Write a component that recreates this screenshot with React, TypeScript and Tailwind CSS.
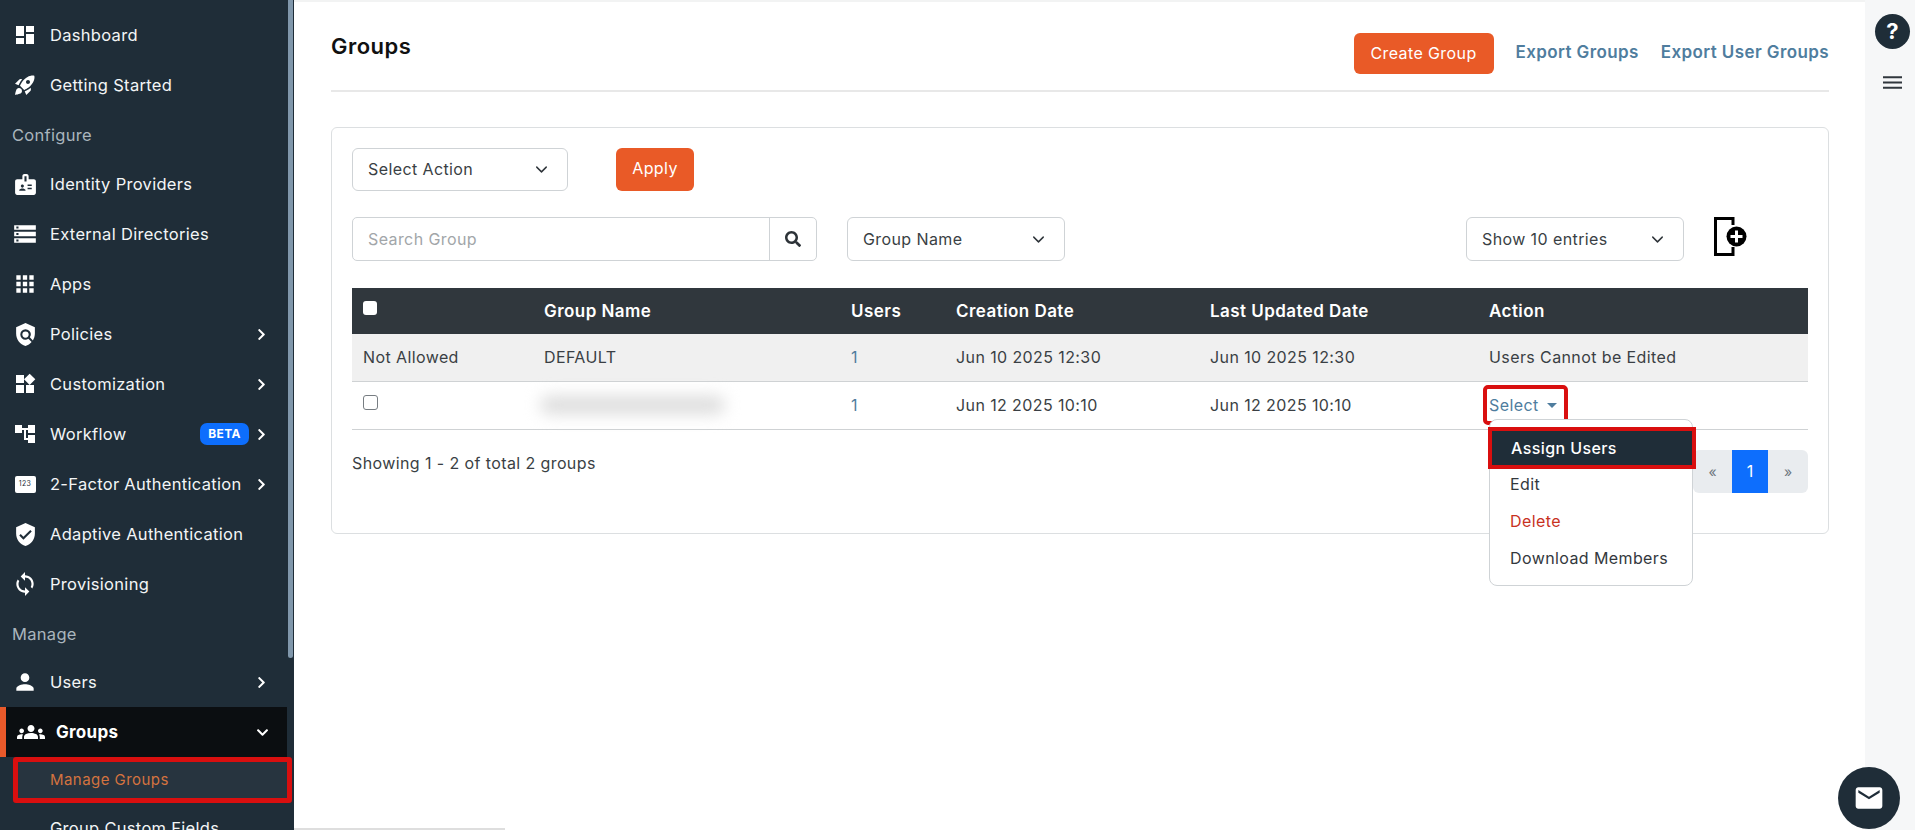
import { ReactElement } from "react";
import { ChevronDown } from "lucide-react";
import { FaChevronDown, FaChevronRight, FaSearch } from "react-icons/fa";
import {
  MdAccountTree,
  MdApps,
  MdBadge,
  MdDashboard,
  MdGroups,
  MdMail,
  MdPerson,
  MdPolicy,
  MdRocketLaunch,
  MdStorage,
  MdSync,
  MdVerifiedUser,
  MdWidgets,
} from "react-icons/md";

type NavProps = {
  icon: ReactElement;
  label: string;
  arrow?: boolean;
  beta?: boolean;
};

const NavRow = ({ icon, label, arrow, beta }: NavProps) => {
  return (
    <div className="flex items-center h-[50px] text-[#f3f5f6] text-[16.5px] tracking-[0.3px]">
      <div className="w-[50px] flex justify-center text-white">{icon}</div>
      <span className="whitespace-nowrap pt-[1px]">{label}</span>
      {beta && (
        <span className="ml-auto w-[49px] h-[22px] rounded-[7px] bg-[#0d6efd] text-white text-[12px] font-bold flex items-center justify-center">
          BETA
        </span>
      )}
      {arrow && (
        <span className={beta ? "ml-[6px] mr-[19px]" : "ml-auto mr-[19px]"}>
          <FaChevronRight size={13} className="text-white" />
        </span>
      )}
    </div>
  );
};

const NavLabel = ({ text, h }: { text: string; h: string }) => (
  <div className={`flex items-center pl-[12px] pt-[2px] text-[16.5px] tracking-[0.3px] text-[#aab5bd] ${h}`}>{text}</div>
);

const Sidebar = () => {
  return (
    <aside className="relative w-[294px] h-[830px] shrink-0 overflow-hidden bg-[#1f2d38] pt-[10px]">
      <div className="w-[287px]">
        <NavRow icon={<MdDashboard size={24} />} label="Dashboard" />
        <NavRow icon={<MdRocketLaunch size={24} />} label="Getting Started" />
        <NavLabel text="Configure" h="h-[49px]" />
        <NavRow icon={<MdBadge size={25} />} label="Identity Providers" />
        <NavRow icon={<MdStorage size={26} />} label="External Directories" />
        <NavRow icon={<MdApps size={26} />} label="Apps" />
        <NavRow icon={<MdPolicy size={25} />} label="Policies" arrow />
        <NavRow icon={<MdWidgets size={24} />} label="Customization" arrow />
        <NavRow icon={<MdAccountTree size={24} />} label="Workflow" beta arrow />
        <NavRow
          icon={
            <span className="w-[21px] h-[17px] rounded-[2px] bg-white text-[#1f2d38] text-[7px] flex items-center justify-center">
              123
            </span>
          }
          label="2-Factor Authentication"
          arrow
        />
        <NavRow icon={<MdVerifiedUser size={25} />} label="Adaptive Authentication" />
        <NavRow icon={<MdSync size={26} />} label="Provisioning" />
        <NavLabel text="Manage" h="h-[48px]" />
        <NavRow icon={<MdPerson size={26} />} label="Users" arrow />
        <div className="flex items-center h-[50px] bg-[#0b0e11] border-l-[6px] border-[#e9592a] text-white text-[17px] tracking-[0.3px] font-bold">
          <div className="w-[50px] flex justify-center">
            <MdGroups size={28} />
          </div>
          <span className="pt-[1px]">Groups</span>
          <FaChevronDown size={13} className="ml-auto mr-[18px]" />
        </div>
      </div>
      <div className="ml-[13px] w-[279px] h-[46px] border-[5px] border-[#d90f0f] rounded-[3px] bg-[#27343f] flex items-center pl-[32px] text-[15px] tracking-[0.45px] text-[#d4733f]">
        Manage Groups
      </div>
      <div className="h-[50px] flex items-center pl-[50px] text-[16.5px] tracking-[0.3px] text-[#f3f5f6]">
        Group Custom Fields
      </div>
      <div className="absolute left-[288px] top-0 w-[5px] h-[658px] rounded-b-[3px] bg-[#8097ab]" />
    </aside>
  );
};

const SelectBox = ({ label, className, textClass }: { label: string; className: string; textClass?: string }) => (
  <div
    className={`flex items-center justify-between border border-[#cfd3d6] rounded-[6px] pl-[15px] pr-[16px] text-[16px] tracking-[0.4px] text-[#3a3f44] ${className}`}
  >
    <span className={textClass}>{label}</span>
    <ChevronDown size={19} strokeWidth={1.8} className="text-[#2d3338]" />
  </div>
);

const cell = "px-[11px] text-left align-middle";
const headCell = "px-[11px] pt-[2px] text-left align-middle font-semibold text-[17px] tracking-[0.45px]";

const Dropdown = () => (
  <div className="absolute top-[37px] left-[11px] z-10 w-[204px] h-[167px] rounded-[8px] border border-[#cfd3d6] bg-white pt-[7px] text-[16px] text-[#33383d]">
    <div className="-ml-[2px] w-[208px] h-[42px] border-[4px] border-[#d90f0f] bg-[#1f2d38] text-white font-medium flex items-center pl-[19px]">
      Assign Users
    </div>
    <div className="-mt-[3px] h-[37px] flex items-center pl-[20px]">Edit</div>
    <div className="h-[37px] flex items-center pl-[20px] text-[#c8321f]">Delete</div>
    <div className="h-[36px] flex items-center pl-[20px]">Download Members</div>
  </div>
);

const GroupsTable = () => (
  <table className="w-full table-fixed border-collapse text-[16px] tracking-[0.4px] text-[#3a3f44]">
    <colgroup>
      <col className="w-[181px]" />
      <col className="w-[307px]" />
      <col className="w-[105px]" />
      <col className="w-[254px]" />
      <col className="w-[279px]" />
      <col />
    </colgroup>
    <thead>
      <tr className="h-[46px] bg-[#30373d] text-white">
        <th className={cell}>
          <span className="block w-[14px] h-[14px] rounded-[3px] bg-white -mt-[7px]" />
        </th>
        <th className={headCell}>Group Name</th>
        <th className={headCell}>Users</th>
        <th className={headCell}>Creation Date</th>
        <th className={headCell}>Last Updated Date</th>
        <th className={headCell}>Action</th>
      </tr>
    </thead>
    <tbody>
      <tr className="h-[47px] bg-[#f0f0f0] border-b border-[#cfd2d4]">
        <td className={cell}>Not Allowed</td>
        <td className={cell}>DEFAULT</td>
        <td className={`${cell} text-[#4f7d9e]`}>1</td>
        <td className={cell}>Jun 10 2025 12:30</td>
        <td className={cell}>Jun 10 2025 12:30</td>
        <td className={cell}>Users Cannot be Edited</td>
      </tr>
      <tr className="h-[48px] border-b border-[#cfd2d4]">
        <td className={cell}>
          <span className="block w-[15px] h-[15px] rounded-[3px] border border-[#777d82] -mt-[6px]" />
        </td>
        <td className={cell}>
          <div className="-ml-[4px] h-[18px] w-[185px] rounded-full bg-[#dcdcdc] blur-[8px]" />
        </td>
        <td className={`${cell} text-[#4f7d9e]`}>1</td>
        <td className={cell}>Jun 12 2025 10:10</td>
        <td className={cell}>Jun 12 2025 10:10</td>
        <td className={`${cell} relative`}>
          <span className="inline-flex items-center gap-[8px] -ml-[2px] pl-[2px] pr-[7px] py-[4px] text-[#4f7d9e] outline-4 outline-[#d90f0f] rounded-[1px]">
            Select
            <span className="w-0 h-0 border-x-[5px] border-x-transparent border-t-[5px] border-t-[#4f7d9e]" />
          </span>
          <Dropdown />
        </td>
      </tr>
    </tbody>
  </table>
);

const App = () => {
  return (
    <div className="relative flex w-full h-[830px] overflow-hidden bg-white font-['Inter','Liberation_Sans',sans-serif]">
      <Sidebar />
      <main className="relative flex-1 h-[830px] border-t-2 border-[#f2f3f3] pl-[37px] pr-[36px] pt-[30px]">
        <div className="flex items-center justify-between h-[41px]">
          <h1 className="text-[22px] tracking-[0.5px] font-semibold text-[#111] -mt-[13px]">Groups</h1>
          <div className="flex items-center gap-[22px]">
            <button className="mt-[1px] w-[140px] h-[41px] rounded-[6px] bg-[#e95a27] text-white text-[16px] tracking-[0.4px] pb-[1px]">
              Create Group
            </button>
            <a className="text-[17px] tracking-[0.4px] font-semibold text-[#4f7d9e]">Export Groups</a>
            <a className="text-[17px] tracking-[0.4px] font-semibold text-[#4f7d9e]">Export User Groups</a>
          </div>
        </div>
        <div className="mt-[17px] border-t-2 border-[#e8e8e8]" />
        <section className="mt-[35px] border border-[#dcdfe1] rounded-[6px] px-[20px] pt-[20px] pb-[40px]">
          <div className="flex items-center h-[43px]">
            <SelectBox label="Select Action" className="w-[216px] h-[43px]" textClass="pb-[2px]" />
            <button className="ml-[48px] w-[78px] h-[43px] rounded-[6px] bg-[#e95a27] text-white text-[16px] tracking-[0.4px] pb-[3px]">
              Apply
            </button>
          </div>
          <div className="flex items-start mt-[26px] h-[44px]">
            <div className="flex w-[465px] h-[44px] border border-[#cfd3d6] rounded-[5px]">
              <div className="flex-1 flex items-center pl-[15px] text-[16px] tracking-[0.4px] text-[#a2a6a9] border-r border-[#cfd3d6]">
                Search Group
              </div>
              <div className="w-[46px] flex items-center justify-center text-[#2d3338]">
                <FaSearch size={16} />
              </div>
            </div>
            <SelectBox label="Group Name" className="ml-[30px] w-[218px] h-[44px]" />
            <SelectBox label="Show 10 entries" className="ml-[401px] w-[218px] h-[44px]" />
            <svg className="ml-[30px]" width="33" height="39" viewBox="0 0 33 39" fill="none">
              <path d="M19 8V1.5H1.5V37.5H19V30" stroke="#000" strokeWidth="3" />
              <circle cx="22.5" cy="19.5" r="10" fill="#000" />
              <path d="M22.5 13.5V25.5M16.5 19.5H28.5" stroke="#fff" strokeWidth="3" />
            </svg>
          </div>
          <div className="mt-[27px]">
            <GroupsTable />
          </div>
          <div className="flex items-start justify-between pt-[20px] h-[63px]">
            <span className="text-[16px] tracking-[0.4px] text-[#3a3f44] mt-[1px]">Showing 1 - 2 of total 2 groups</span>
            <div className="flex w-[115px] h-[43px] rounded-[6px] overflow-hidden bg-[#e9ecef] text-[#6c757d] text-[14px]">
              <span className="w-[39px] flex items-center justify-center">«</span>
              <span className="w-[36px] flex items-center justify-center bg-[#0d6efd] text-white text-[16px]">1</span>
              <span className="w-[40px] flex items-center justify-center">»</span>
            </div>
          </div>
        </section>
        <div className="absolute left-0 bottom-0 w-[211px] h-[2px] bg-[#dedede]" />
      </main>
      <div className="w-[50px] shrink-0 h-[830px] bg-[#f6f7f8] pt-[14px] pl-[10px]">
        <div className="w-[35px] h-[35px] rounded-full bg-[#1f2d38] text-white text-[22px] font-bold flex items-center justify-center">
          ?
        </div>
        <svg className="mt-[27px] ml-[8px]" width="19" height="13" viewBox="0 0 19 13">
          <path d="M0 1.2H19M0 6.5H19M0 11.8H19" stroke="#30373d" strokeWidth="2" />
        </svg>
      </div>
      <div className="absolute left-[1838px] top-[767px] w-[62px] h-[62px] rounded-full bg-[#1f2d38] flex items-center justify-center text-white">
        <MdMail size={32} />
      </div>
    </div>
  );
};

export default App;
